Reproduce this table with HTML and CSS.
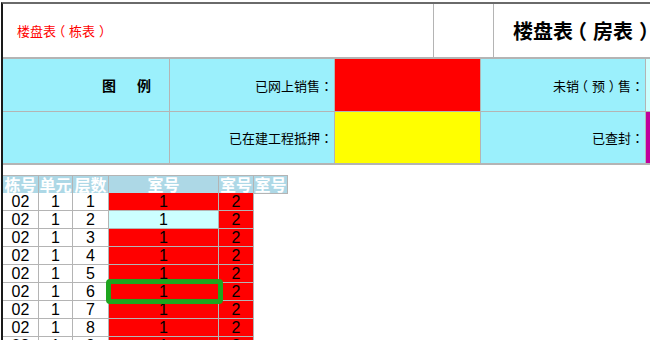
FILE: index.html
```html
<!DOCTYPE html>
<html lang="zh-CN">
<head>
<meta charset="utf-8">
<title>楼盘表</title>
<link rel="stylesheet" href="styles.css">
</head>
<body>
<div class="page">
  <div class="head">
    <div class="head-a">楼盘表<span class="po">（</span>栋表<span class="pc">）</span></div>
    <div class="head-b"></div>
    <div class="head-c">楼盘表<span class="po">（</span>房表<span class="pc">）</span></div>
  </div>
  <div class="legend">
    <div class="lg lg-title"><span>图</span><span>例</span></div>
    <div class="lg lg-label">已网上销售<span class="pu">：</span></div>
    <div class="lg sw-red"></div>
    <div class="lg lg-label">未销<span class="po">（</span>预<span class="pc">）</span>售<span class="pu">：</span></div>
    <div class="lg sw-light"></div>

    <div class="lg lg-b2"></div>
    <div class="lg lg-b2 lg-label">已在建工程抵押<span class="pu">：</span></div>
    <div class="lg lg-b2 sw-yellow"></div>
    <div class="lg lg-b2 lg-label">已查封<span class="pu">：</span></div>
    <div class="lg lg-b2 sw-magenta"></div>
  </div>

  <div class="grid">
    <div class="th">栋号</div><div class="th">单元</div><div class="th">层数</div><div class="th">室号</div><div class="th">室号</div><div class="th">室号</div>

    <div class="td">02</div><div class="td">1</div><div class="td">1</div><div class="td red">1</div><div class="td red">2</div><div class="blank"></div>
    <div class="td">02</div><div class="td">1</div><div class="td">2</div><div class="td light">1</div><div class="td red">2</div><div class="blank"></div>
    <div class="td">02</div><div class="td">1</div><div class="td">3</div><div class="td red">1</div><div class="td red">2</div><div class="blank"></div>
    <div class="td">02</div><div class="td">1</div><div class="td">4</div><div class="td red">1</div><div class="td red">2</div><div class="blank"></div>
    <div class="td">02</div><div class="td">1</div><div class="td">5</div><div class="td red">1</div><div class="td red">2</div><div class="blank"></div>
    <div class="td">02</div><div class="td">1</div><div class="td">6</div><div class="td red selected">1<span class="sel-box"></span></div><div class="td red">2</div><div class="blank"></div>
    <div class="td">02</div><div class="td">1</div><div class="td">7</div><div class="td red">1</div><div class="td red">2</div><div class="blank"></div>
    <div class="td">02</div><div class="td">1</div><div class="td">8</div><div class="td red">1</div><div class="td red">2</div><div class="blank"></div>
    <div class="td">02</div><div class="td">1</div><div class="td">9</div><div class="td red">1</div><div class="td red">2</div><div class="blank"></div>
  </div>
</div>
</body>
</html>
```

FILE: styles.css
```css
html, body {
  margin: 0;
  padding: 0;
  background: #ffffff;
}
body {
  width: 650px;
  height: 340px;
  overflow: hidden;
  font-family: "Noto Sans CJK SC", "DejaVu Sans", sans-serif;
  color: #000;
}
.page {
  margin: 2px 0 0 1px;
  border-top: 2px solid #6a6a6a;
  border-left: 2px solid #1a1a1a;
  min-height: 400px;
  width: 700px;
}
.pu {
  font-family: "Noto Sans CJK TC", "Noto Sans CJK SC", sans-serif;
}
.po {
  margin-left: -0.3em;
  margin-right: 0.3em;
}
.pc {
  margin-left: 0.3em;
  margin-right: -0.3em;
}
.head {
  display: flex;
  height: 55px;
  box-sizing: border-box;
  border-bottom: 2px solid #b4b4b4;
}
.head-a {
  width: 431px;
  box-sizing: border-box;
  border-right: 1px solid #b4b4b4;
  padding-left: 14px;
  display: flex;
  align-items: center;
  color: #ff0000;
  font-size: 13px;
  white-space: nowrap;
}
.head-b {
  width: 60px;
  box-sizing: border-box;
  border-right: 1px solid #b4b4b4;
}
.head-c {
  flex: 1;
  padding-left: 19px;
  display: flex;
  align-items: center;
  font-size: 20px;
  font-weight: bold;
  white-space: nowrap;
}
.legend {
  display: grid;
  grid-template-columns: 167px 165px 146px 165px 1fr;
  grid-auto-rows: 53px;
}
.lg {
  box-sizing: border-box;
  border-right: 1px solid #b4b4b4;
  border-bottom: 1px solid #b4b4b4;
  background: #9bf0fc;
  font-size: 13px;
}
.lg-b2 {
  border-bottom-width: 2px;
}
.lg-title {
  display: flex;
  justify-content: flex-end;
  align-items: center;
  gap: 21px;
  padding-right: 18px;
  font-weight: bold;
  font-size: 14px;
}
.lg-label {
  display: flex;
  justify-content: flex-end;
  align-items: center;
  padding-right: 1px;
  white-space: nowrap;
}
.sw-red { background: #ff0000; }
.sw-yellow { background: #ffff00; }
.sw-light { background: #ccffff; border-right: none; }
.sw-magenta { background: #c0009c; border-right: none; }

.grid {
  margin-top: 10px;
  display: grid;
  grid-template-columns: 36px 34px 36px 110px 35px 34px;
  grid-auto-rows: 18px;
  width: 285px;
}
.th {
  box-sizing: border-box;
  border-top: 1px solid #b4b4b4;
  border-right: 1px solid #b4b4b4;
  border-bottom: 1px solid #b4b4b4;
  background: #add8e6;
  color: #ffffff;
  font-weight: bold;
  font-size: 16px;
  line-height: 17px;
  text-align: center;
  white-space: nowrap;
  overflow: hidden;
  height: 19px;
  margin-bottom: -1px;
}
.td {
  box-sizing: border-box;
  border-right: 1px solid #b4b4b4;
  border-bottom: 1px solid #b4b4b4;
  font-family: "Liberation Sans", "DejaVu Sans", sans-serif;
  font-size: 16px;
  line-height: 17px;
  text-align: center;
  background: #ffffff;
}
.red { background: #ff0000; }
.light { background: #ccffff; }
.selected { position: relative; }
.sel-box {
  position: absolute;
  left: -3px;
  top: -4px;
  right: -5px;
  bottom: -4px;
  border: 5px solid #1ea51e;
  border-radius: 4px;
}
```
